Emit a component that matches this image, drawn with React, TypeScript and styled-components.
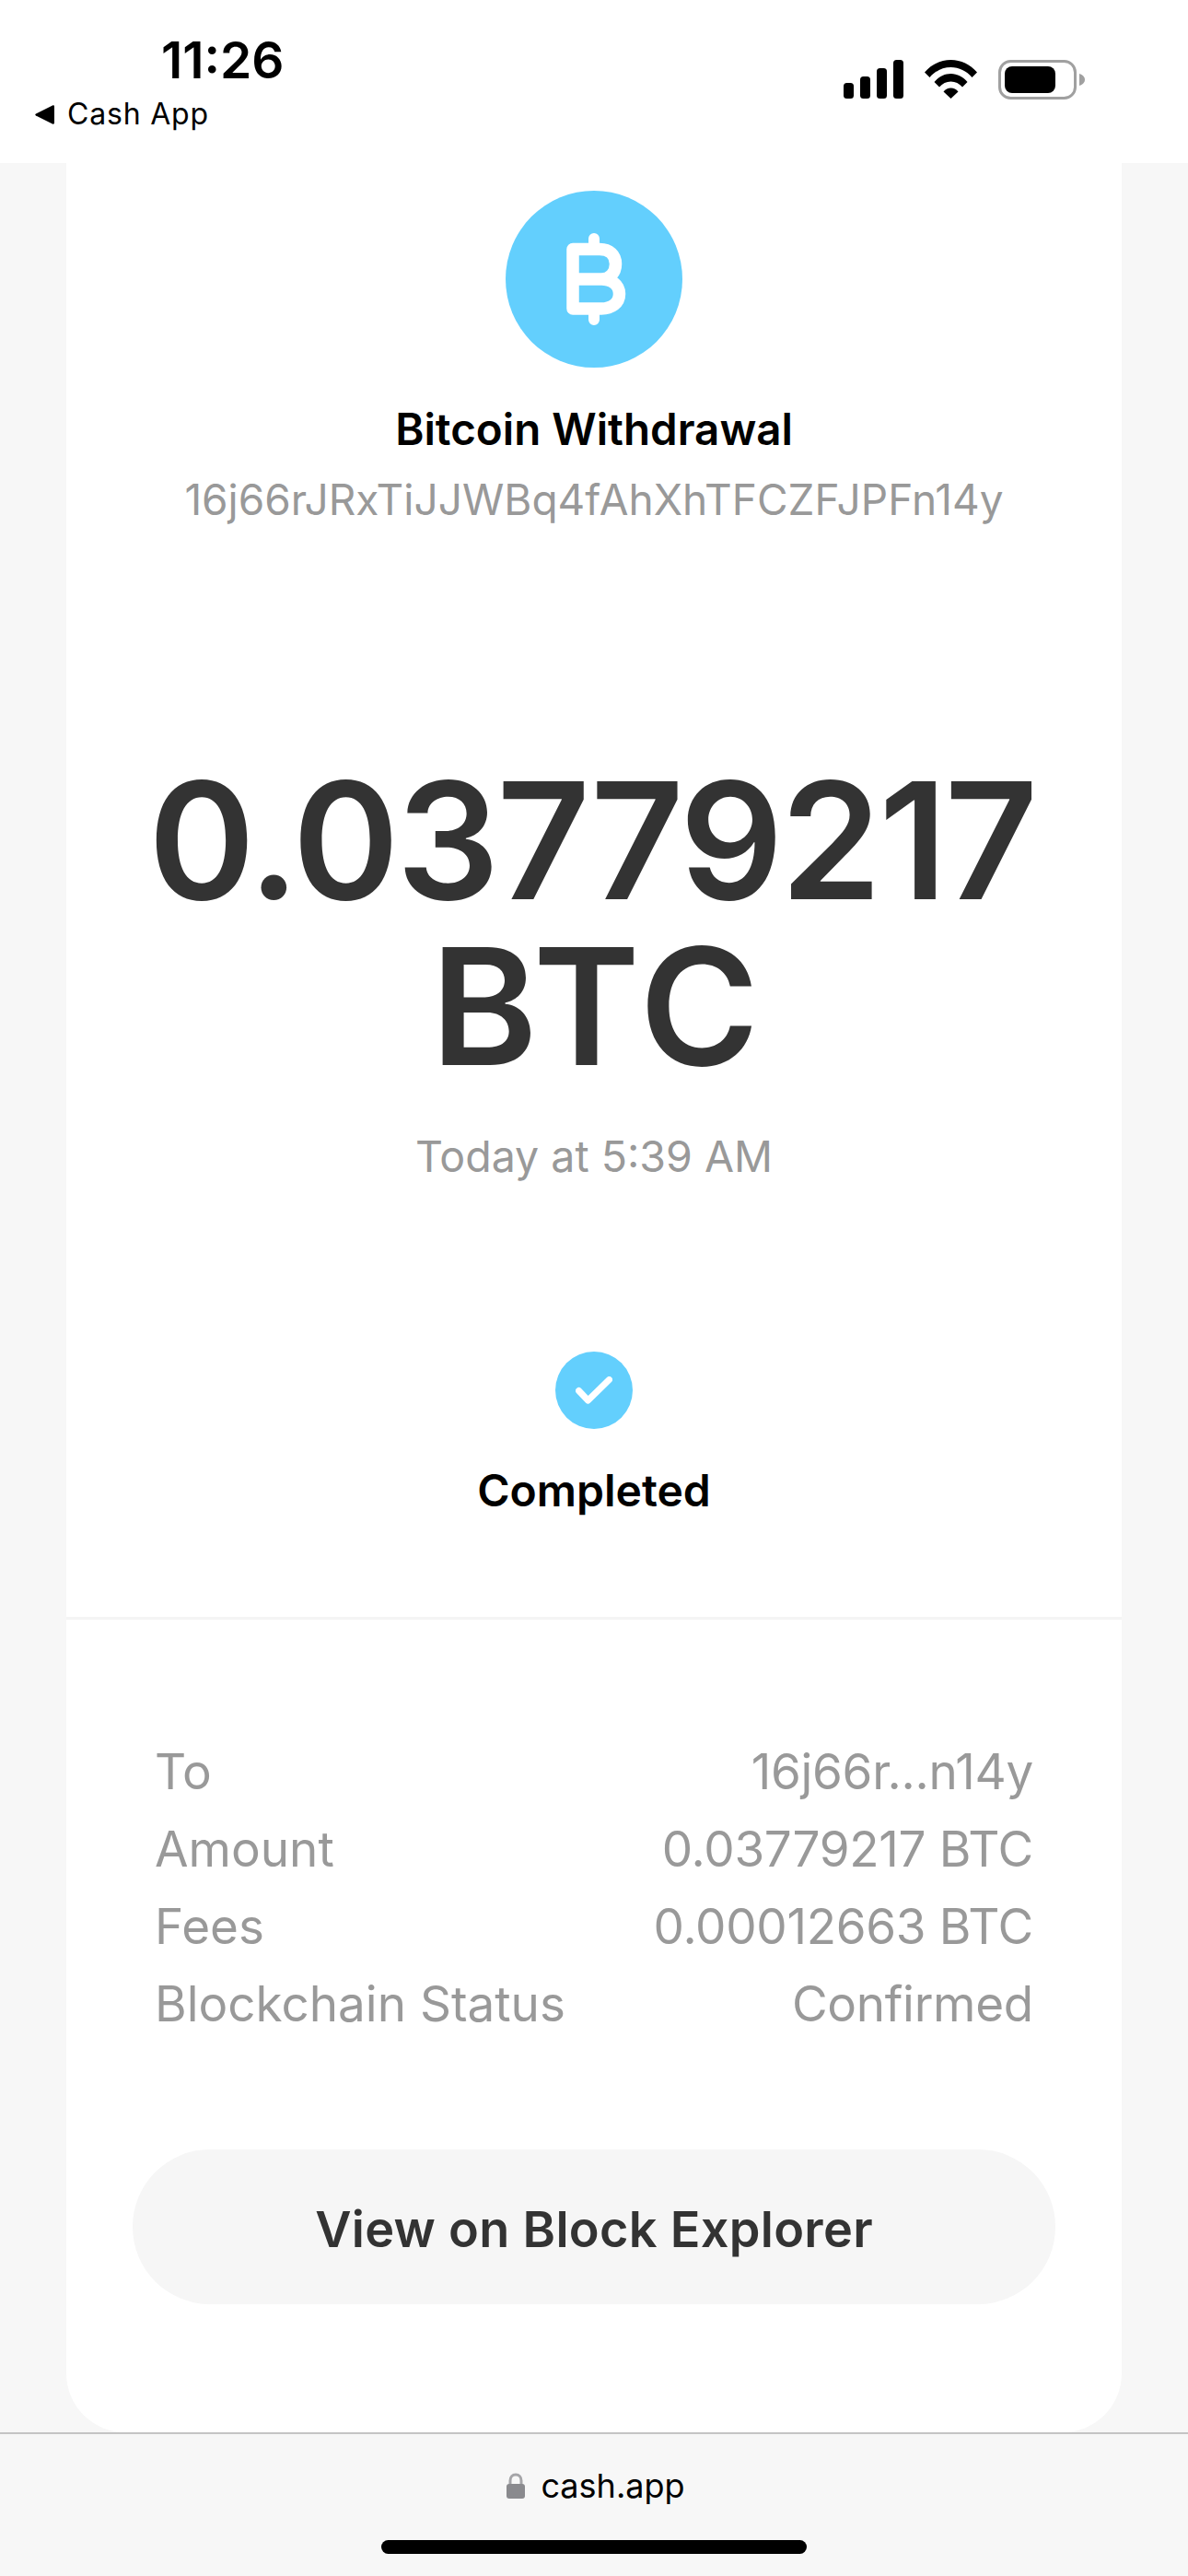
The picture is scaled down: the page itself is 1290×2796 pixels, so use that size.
import styled, { createGlobalStyle } from 'styled-components';

const GlobalStyle = createGlobalStyle`
  html, body {
    margin: 0;
    padding: 0;
    background: #f7f7f7;
  }
  * {
    box-sizing: border-box;
  }
`;

const Screen = styled.div`
  display: flex;
  flex-direction: column;
  width: 1290px;
  height: 2796px;
  overflow: hidden;
  background: #f7f7f7;
  font-family: Inter, 'Noto Sans', sans-serif;
`;

const StatusBar = styled.header`
  display: flex;
  justify-content: space-between;
  flex: 0 0 177px;
  padding: 36px 112px 0 38px;
  background: #fff;
`;

const StatusLeft = styled.div`
  display: flex;
  flex-direction: column;
`;

const Clock = styled.div`
  padding-left: 137px;
  font-size: 55px;
  line-height: 58px;
  font-weight: 600;
  color: #000;
`;

const BackLink = styled.div`
  display: flex;
  align-items: center;
  gap: 13px;
  margin-top: 10px;
  font-size: 32px;
  line-height: 40px;
  letter-spacing: 0.8px;
  color: #000;
`;

const StatusIcons = styled.div`
  display: flex;
  align-items: flex-start;
  gap: 23px;
  padding-top: 29px;
`;

const Main = styled.main`
  flex: 1;
  padding: 0 72px;
  min-height: 0;
`;

const Card = styled.section`
  display: flex;
  flex-direction: column;
  height: 100%;
  background: #fff;
  border-radius: 0 0 64px 64px;
`;

const Summary = styled.div`
  display: flex;
  flex-direction: column;
  align-items: center;
  flex: 0 0 1581px;
  padding-top: 30px;
  border-bottom: 3px solid #f4f4f4;
`;

const CoinBadge = styled.div`
  display: flex;
  align-items: center;
  justify-content: center;
  width: 192px;
  height: 192px;
  border-radius: 50%;
  background: #63cffd;
`;

const BitcoinGlyph = styled.svg`
  margin-left: 5px;
`;

const Title = styled.h1`
  margin: 37px 0 0;
  font-size: 47.500px;
  line-height: 60px;
  font-weight: 600;
  color: #000;
`;

const Address = styled.div`
  margin-top: 18px;
  font-size: 46px;
  line-height: 56px;
  color: #999;
`;

const Amount = styled.div`
  width: 1000px;
  margin-top: 252px;
  font-size: 176px;
  line-height: 180px;
  font-weight: 600;
  text-align: center;
  color: #333;
`;

const AmountFigure = styled.div`
  padding-right: 5px;
  letter-spacing: -3px;
`;

const AmountUnit = styled.div`
  padding-left: 7px;
  letter-spacing: 5px;
`;

const Timestamp = styled.div`
  margin-top: 43px;
  font-size: 46.500px;
  line-height: 60px;
  color: #999;
`;

const CheckBadge = styled.div`
  display: flex;
  align-items: center;
  justify-content: center;
  width: 84px;
  height: 84px;
  margin-top: 182px;
  border-radius: 50%;
  background: #63cffd;
`;

const StatusLabel = styled.div`
  margin-top: 37px;
  font-size: 48px;
  line-height: 60px;
  font-weight: 600;
  color: #000;
`;

const Details = styled.dl`
  display: flex;
  flex-direction: column;
  margin: 0;
  padding: 123px 96px 0;
`;

const DetailRow = styled.div`
  display: flex;
  justify-content: space-between;
  font-size: 53px;
  line-height: 84px;
  color: #999;
`;

const DetailName = styled.dt`
  margin: 0;
`;

const DetailValue = styled.dd`
  margin: 0;
  letter-spacing: -0.3px;
`;

const ExplorerButton = styled.button`
  display: block;
  width: 1002px;
  height: 168px;
  margin: 116px 72px 0;
  padding: 4px 0 0;
  border: 0;
  border-radius: 84px;
  background: #f6f6f6;
  font-family: inherit;
  font-size: 54px;
  letter-spacing: 0.3px;
  font-weight: 600;
  color: #333;
`;

const Footer = styled.footer`
  display: flex;
  flex-direction: column;
  align-items: center;
  flex: 0 0 156px;
  border-top: 2px solid #c4c4c4;
`;

const UrlBar = styled.div`
  display: flex;
  align-items: center;
  gap: 17px;
  margin-top: 33px;
  padding-left: 4px;
  font-size: 36px;
  line-height: 46px;
  color: #000;
`;

const HomeBar = styled.div`
  width: 462px;
  height: 15px;
  margin-top: 36px;
  border-radius: 8px;
  background: #000;
`;

const details = [
  { name: 'To', value: '16j66r...n14y' },
  { name: 'Amount', value: '0.03779217 BTC' },
  { name: 'Fees', value: '0.00012663 BTC' },
  { name: 'Blockchain Status', value: 'Confirmed' },
];

const SignalIcon = () => (
  <svg width="65" height="42" viewBox="0 0 65 42" fill="#000">
    <rect x="0" y="25" width="11" height="17" rx="3.5" />
    <rect x="18" y="18" width="11" height="24" rx="3.5" />
    <rect x="36" y="9" width="11" height="33" rx="3.5" />
    <rect x="54" y="0" width="11" height="42" rx="3.5" />
  </svg>
);

const WifiIcon = () => (
  <svg width="57" height="42" viewBox="0 0 57 42" fill="#000">
    <path d="M0 13.5C7.5 5 17.5 0 28.5 0S49.5 5 57 13.5L51.5 19C45.500 12 37.500 8 28.500 8S11.500 12 5.500 19Z" />
    <path d="M10.500 24C15 18.500 21.500 15 28.500 15S42 18.500 46.500 24L41 29.500C37.500 25.500 33.500 23.500 28.500 23.500S19.500 25.500 16 29.500Z" />
    <path d="M20.500 34.500C22.500 32 25.500 30.500 28.500 30.500S34.500 32 36.500 34.500L28.500 42Z" />
  </svg>
);

const BatteryIcon = () => (
  <svg width="94" height="43" viewBox="0 0 94 43">
    <rect x="1.500" y="1.500" width="82" height="40" rx="12" fill="none" stroke="#a0a0a0" strokeWidth="3" />
    <rect x="7" y="7" width="55" height="29" rx="8" fill="#000" />
    <path d="M88 15C91.500 16 94 18.500 94 21.500S91.500 27 88 28Z" fill="#a0a0a0" />
  </svg>
);

const BackArrow = () => (
  <svg width="22" height="21" viewBox="0 0 22 21" fill="#000">
    <path d="M21 1.500V19.500C21 20.500 20 21 19 20.500L1 11.500C0 11 0 10 1 9.500L19 .5C20 0 21 .5 21 1.500Z" />
  </svg>
);

const BitcoinIcon = () => (
  <BitcoinGlyph width="65" height="100" viewBox="0 0 65 100" fill="none" stroke="#fff" strokeLinecap="round">
    <path d="M30 6V17M30 83V94" strokeWidth="12" />
    <path
      d="M7 50V17.500H36C47 17.500 53.500 24 53.500 33.500C53.500 43 47 50 38 50H7V82H38C49 82 57.500 76 57.500 66C57.500 56 49 50 38 50"
      strokeWidth="13.500"
      strokeLinejoin="round"
    />
  </BitcoinGlyph>
);

const CheckIcon = () => (
  <svg width="40" height="30" viewBox="0 0 40 30" fill="none" stroke="#fff" strokeWidth="7" strokeLinecap="round" strokeLinejoin="round">
    <path d="M3.500 15.500L13.500 26L36.500 3.500" />
  </svg>
);

const LockIcon = () => (
  <svg width="20" height="28" viewBox="0 0 20 28">
    <path d="M4 13V8.500C4 4.500 6.500 2 10 2S16 4.500 16 8.500V13" fill="none" stroke="#a5a5a8" strokeWidth="3" />
    <rect x="0" y="12" width="20" height="16" rx="3" fill="#8a8a8e" />
  </svg>
);

export default function App(): JSX.Element {
  return (
    <Screen>
      <GlobalStyle />
      <StatusBar>
        <StatusLeft>
          <Clock>11:26</Clock>
          <BackLink>
            <BackArrow />
            Cash App
          </BackLink>
        </StatusLeft>
        <StatusIcons>
          <SignalIcon />
          <WifiIcon />
          <BatteryIcon />
        </StatusIcons>
      </StatusBar>
      <Main>
        <Card>
          <Summary>
            <CoinBadge>
              <BitcoinIcon />
            </CoinBadge>
            <Title>Bitcoin Withdrawal</Title>
            <Address>16j66rJRxTiJJWBq4fAhXhTFCZFJPFn14y</Address>
            <Amount>
              <AmountFigure>0.03779217</AmountFigure>
              <AmountUnit>BTC</AmountUnit>
            </Amount>
            <Timestamp>Today at 5:39 AM</Timestamp>
            <CheckBadge>
              <CheckIcon />
            </CheckBadge>
            <StatusLabel>Completed</StatusLabel>
          </Summary>
          <Details>
            {details.map(row => (
              <DetailRow key={row.name}>
                <DetailName>{row.name}</DetailName>
                <DetailValue>{row.value}</DetailValue>
              </DetailRow>
            ))}
          </Details>
          <ExplorerButton>View on Block Explorer</ExplorerButton>
        </Card>
      </Main>
      <Footer>
        <UrlBar>
          <LockIcon />
          cash.app
        </UrlBar>
        <HomeBar />
      </Footer>
    </Screen>
  );
}
